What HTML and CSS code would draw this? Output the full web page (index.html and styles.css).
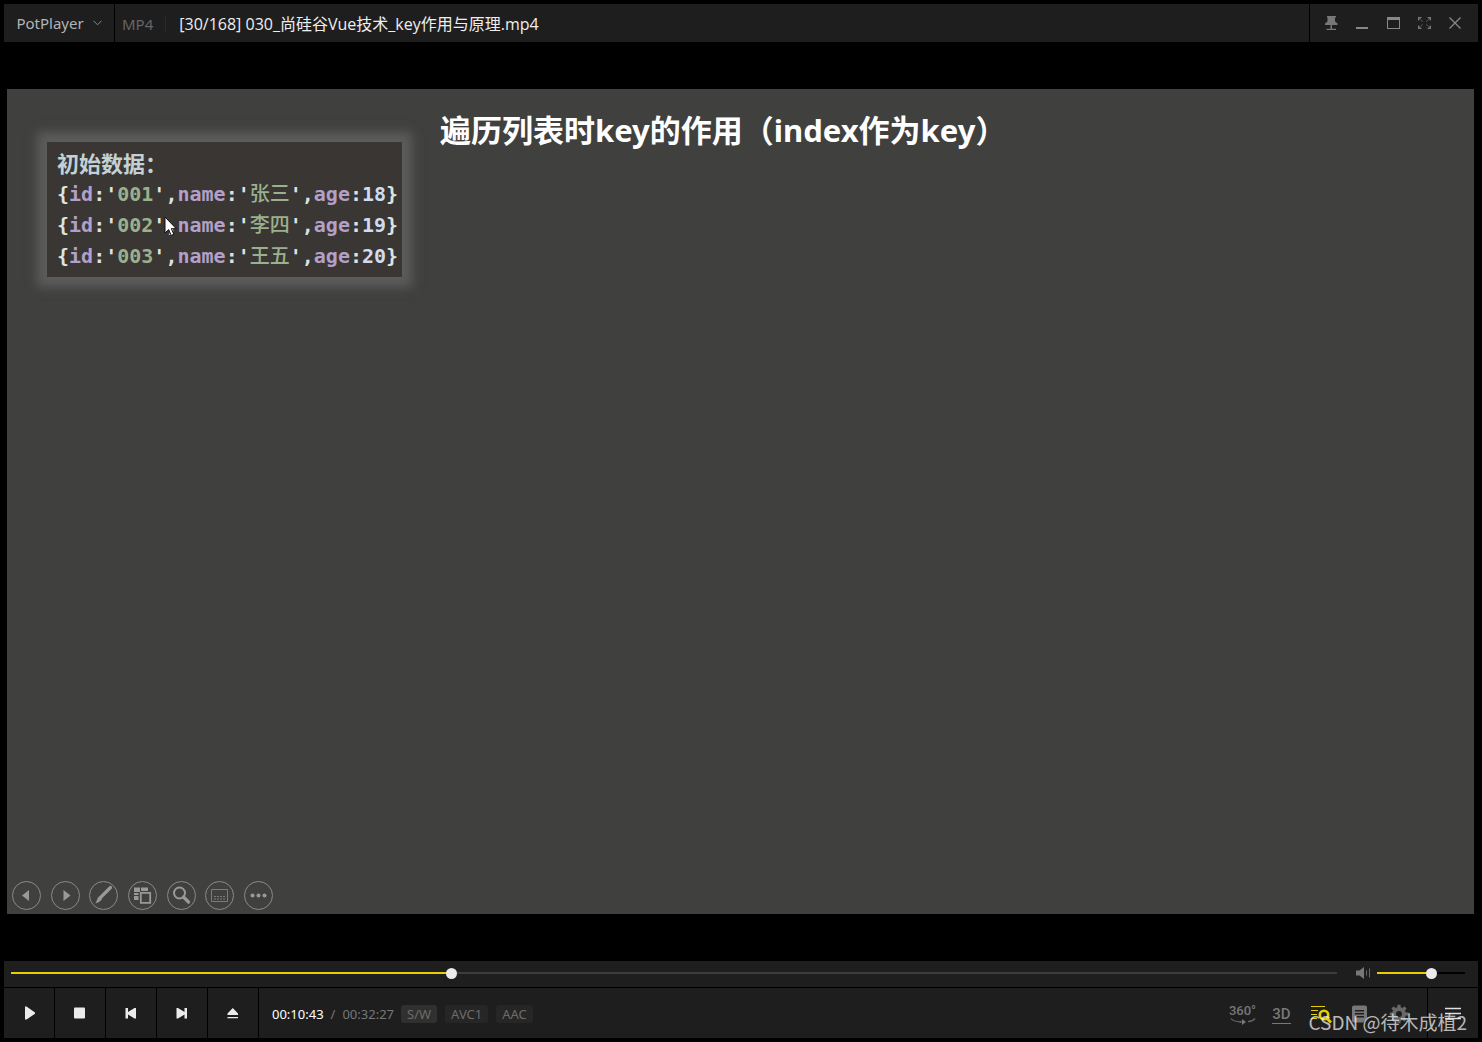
FILE: index.html
```html
<!DOCTYPE html>
<html lang="zh-CN">
<head>
<meta charset="utf-8">
<meta name="viewport" content="width=device-width, initial-scale=1">
<title>PotPlayer</title>
<link rel="stylesheet" href="styles.css">
</head>
<body>
<div class="player">
  <header class="titlebar">
    <button class="brand" type="button">PotPlayer
      <svg width="9" height="6" viewBox="0 0 9 6"><path d="M.5 .8 4.5 4.800 8.500 .8" fill="none" stroke="#8a8a8a"/></svg>
    </button>
    <div class="file">
      <span class="format">MP4</span>
      <span class="filename">[30/168] 030_尚硅谷Vue技术_key作用与原理.mp4</span>
    </div>
    <div class="window-buttons">
      <button type="button" aria-label="Pin"><svg width="14" height="16" viewBox="0 0 14 16" fill="#777"><path d="M3 1h9v1.500h-1v4l2.500 2V10H1V8.500l2.500-2v-4H3zM6.500 10h1.500v4h-1.500zM2.500 13.800h9.500V15H2.500z"/></svg></button>
      <button type="button" aria-label="Minimize"><svg width="14" height="16" viewBox="0 0 14 16"><path d="M1 12h12v2H1z" fill="#888"/></svg></button>
      <button type="button" aria-label="Maximize"><svg width="14" height="16" viewBox="0 0 14 16"><path d="M1 2h13v12H1zM2 5v8h11V5z" fill="#888" fill-rule="evenodd"/></svg></button>
      <button type="button" aria-label="Full screen"><svg width="14" height="16" viewBox="0 0 14 16" fill="#777"><path d="M1 2h4L1 6zM14 2v4l-4-4zM1 14v-4l4 4zM14 14h-4l4-4z"/><path d="m2 3 4 4M13 3 9 7M2 13l4-4M13 13 9 9" fill="none" stroke="#666" stroke-dasharray="2 1"/></svg></button>
      <button type="button" aria-label="Close"><svg width="14" height="16" viewBox="0 0 14 16"><path d="m1.500 2.500 11 11M12.500 2.500l-11 11" fill="none" stroke="#888" stroke-width="1.300"/></svg></button>
    </div>
  </header>

  <main class="stage">
    <section class="slide">
      <div class="slide-body">
        <div class="code">
          <h2 class="code-title">初始数据：</h2>
          <p>{<i>id</i>:'<b>001</b>',<i>name</i>:'<b class="han">张三</b>',<i>age</i>:<em>18</em>}</p>
          <p>{<i>id</i>:'<b>002</b>',<i>name</i>:'<b class="han">李四</b>',<i>age</i>:<em>19</em>}</p>
          <p>{<i>id</i>:'<b>003</b>',<i>name</i>:'<b class="han">王五</b>',<i>age</i>:<em>20</em>}</p>
          <svg class="cursor" width="14" height="21" viewBox="0 0 14 21"><path d="M1 1v16l3.700-3.400 2.500 5.800 2.600-1.100-2.500-5.600h5z" fill="#fff" stroke="#111"/></svg>
        </div>
        <h1 class="slide-title">遍历列表时key的作用（index作为key）</h1>
      </div>
      <nav class="slide-tools">
        <button type="button" aria-label="Previous slide"><svg width="27" height="27" viewBox="0 0 27 27"><path d="M16 8v11l-7-5.500z" fill="#999"/></svg></button>
        <button type="button" aria-label="Next slide"><svg width="27" height="27" viewBox="0 0 27 27"><path d="M11.500 8v11l7-5.500z" fill="#999"/></svg></button>
        <button type="button" aria-label="Pen"><svg width="27" height="27" viewBox="0 0 27 27"><path d="M20.500 5.500 13 13M12 14l-3 3" stroke="#999" stroke-width="3.200" stroke-linecap="round"/><path d="m9.500 15 2.500 2.500-3 2.500-3.500 1.500L7 18z" fill="#999"/></svg></button>
        <button type="button" aria-label="All slides"><svg width="27" height="27" viewBox="0 0 27 27"><path d="M5 5.500h6V10H5zM12 5.500h7V9h-7zM5 11h4.500v2H5zM5 14h4.500v4H5z" fill="#999"/><path d="M11.800 10.800h9.400v10h-9.400z" fill="#40403f" stroke="#999" stroke-width="1.800"/></svg></button>
        <button type="button" aria-label="Zoom"><svg width="27" height="27" viewBox="0 0 27 27" fill="none" stroke="#999"><circle cx="11.500" cy="11" r="5.500" stroke-width="2"/><path d="m15.500 15 5 5" stroke-width="3.200" stroke-linecap="round"/></svg></button>
        <button type="button" aria-label="Subtitles"><svg width="27" height="27" viewBox="0 0 27 27" fill="none" stroke="#7c7c7b"><path d="M5.500 7.500h16v12h-16z"/><path d="M8 14.500h11M8 17h11" stroke-dasharray="2 1"/></svg></button>
        <button type="button" aria-label="More"><svg width="27" height="27" viewBox="0 0 27 27" fill="#999"><circle cx="7.500" cy="13.500" r="2"/><circle cx="13.500" cy="13.500" r="2"/><circle cx="19.500" cy="13.500" r="2"/></svg></button>
      </nav>
    </section>
  </main>

  <div class="seekbar">
    <input class="seek" type="range" min="0" max="1947" value="644" aria-label="Position" style="--fill:33%">
    <button class="mute" type="button" aria-label="Mute"><svg width="16" height="14" viewBox="0 0 16 14"><path d="M1 4.500h3.500L9 1v12L4.500 9.500H1z" fill="#777"/><path d="M11.500 4.500v5M14.500 2.500v9" stroke="#666"/></svg></button>
    <input class="volume" type="range" min="0" max="100" value="63" aria-label="Volume" style="--fill:62%">
  </div>

  <footer class="controls">
    <button class="cell" type="button" aria-label="Play"><svg width="14" height="14" viewBox="0 0 14 14"><path d="M3 .5v13h1.500L13 7.800V6.500L4.500.5z" fill="#ebebeb"/></svg></button>
    <button class="cell" type="button" aria-label="Stop"><svg width="14" height="14" viewBox="0 0 14 14"><rect x="1" y="1.500" width="11" height="11" rx="1" fill="#ebebeb"/></svg></button>
    <button class="cell" type="button" aria-label="Previous"><svg width="14" height="14" viewBox="0 0 14 14"><path d="M1.500 2H4v4l6.500-4h1.500v10.500h-1.500L4 8.500v4H1.500z" fill="#ebebeb"/></svg></button>
    <button class="cell" type="button" aria-label="Next"><svg width="14" height="14" viewBox="0 0 14 14"><path d="M12 2H9.500v4L3 2H1.500v10.500H3l6.500-4v4H12z" fill="#ebebeb"/></svg></button>
    <button class="cell" type="button" aria-label="Open"><svg width="14" height="14" viewBox="0 0 14 14"><path d="M6.800 2 1.500 7.500V9h10.500V7.500zM1.500 11h10.500v1.200H1.500z" fill="#ebebeb"/></svg></button>
    <div class="info">
      <span class="time">00:10:43</span>
      <span class="slash">/</span>
      <span class="total">00:32:27</span>
      <div class="badges">
        <span class="badge badge-on">S/W</span>
        <span class="badge">AVC1</span>
        <span class="badge">AAC</span>
      </div>
      <div class="features">
        <button class="vr" type="button">360°<svg width="26" height="7" viewBox="0 0 26 7"><path d="M1 .5Q3 3.500 11 4M25 .5q-2 2.500-7 3.200" fill="none" stroke="#666" stroke-width="1.300"/><path d="M10 3.400h2V1l4 3-4 3V4.600h-2z" fill="#777"/></svg></button>
        <button class="three-d" type="button"><span>3D</span></button>
        <button type="button" aria-label="Browse"><svg width="22" height="20" viewBox="0 0 22 20" fill="none" stroke="#e6cf00"><path d="M1 2.500h14M1 6.500h7M1 10.500h6M1 14.500h6" stroke-width="1.200"/><circle cx="14" cy="11" r="4.200" stroke-width="2.600"/><path d="m17 14.500 4 4" stroke-width="3"/></svg></button>
        <button type="button" aria-label="Playlist"><svg width="18" height="20" viewBox="0 0 18 20"><path d="M3 1.500h11q2 0 2 2V14l-4 4.500H3q-2 0-2-2v-13q0-2 2-2zM4 6v1.500h9V6zM4 9v1.500h9V9zM4 12v1.500h9V12z" fill="#777" fill-rule="evenodd"/></svg></button>
        <button type="button" aria-label="Settings"><svg width="20" height="20" viewBox="0 0 20 20"><circle cx="10" cy="10" r="5" fill="none" stroke="#686868" stroke-width="4"/><path d="M10 .8v4M10 15.200v4M.8 10h4M15.200 10h4M3.500 3.500l3 3M13.500 13.500l3 3M16.500 3.500l-3 3M6.500 13.500l-3 3" stroke="#686868" stroke-width="3.200"/></svg></button>
      </div>
    </div>
    <button class="cell" type="button" aria-label="Menu"><svg width="16" height="14" viewBox="0 0 16 14"><path d="M0 2.500h16M0 7.500h16M0 12.500h16" stroke="#e0e0e0" stroke-width="1.400"/></svg></button>
  </footer>
  <div class="watermark">CSDN @待木成植2</div>
</div>
</body>
</html>
```
FILE: styles.css
```css
* {
  box-sizing: border-box;
}

body {
  margin: 0;
  background: #000;
  color: #777;
  font: 13px/18px "Noto Sans", "Noto Sans CJK SC", sans-serif;
}

button {
  display: flex;
  align-items: center;
  justify-content: center;
  margin: 0;
  padding: 0;
  border: 0;
  background: none;
  color: inherit;
  font: inherit;
}

svg {
  display: block;
  flex: none;
}

.player {
  position: relative;
  display: flex;
  flex-direction: column;
  min-height: 100vh;
  padding: 4px;
}

.titlebar {
  display: flex;
  gap: 1px;
  height: 38px;
}

.brand,
.file,
.window-buttons {
  background: #1e1e1e;
}

.brand {
  gap: 9px;
  width: 110px;
  color: #b4b4b4;
  font-size: 15px;
}

.file {
  display: flex;
  flex: 1;
  align-items: center;
  gap: 13px;
  padding: 2px 7px 0;
  font-size: 16px;
}

.format {
  padding-right: 12px;
  border-right: 1px solid #2a2a2a;
  color: #666;
  font-size: 15px;
}

.filename {
  color: #eee;
  font-family: "Open Sans", "Noto Sans CJK SC", sans-serif;
}

.window-buttons {
  display: flex;
  padding: 0 8px 0 5px;
}

.window-buttons button {
  width: 31px;
}

.stage {
  display: flex;
  flex: 1;
  padding: 47px 4px 47px 3px;
}

.slide {
  display: flex;
  flex: 1;
  flex-direction: column;
  justify-content: space-between;
  background: #40403f;
}

.slide-body {
  display: flex;
  align-items: flex-start;
  gap: 38px;
  padding-left: 40px;
}

.code {
  position: relative;
  width: 355px;
  margin-top: 53px;
  padding: 5px 0 5px 10px;
  background: #393634;
  box-shadow: 0 0 10px 10px #5c5c5b;
  color: #dde3e0;
  font: bold 20px/31px "DejaVu Sans Mono", "Noto Sans CJK SC", monospace;
  white-space: nowrap;
}

.code p {
  height: 31px;
  margin: 0;
}

.code i,
.code em {
  font-style: normal;
}

.code i {
  color: #b3a0c8;
}

.code b {
  color: #9bb08c;
}

.code .han {
  font-weight: 500;
}

.code em {
  color: #cfdcf0;
}

.code-title {
  margin: 0 0 1px;
  color: #c3d0d4;
  font: bold 22px/31px "Noto Sans CJK SC", sans-serif;
}

.cursor {
  position: absolute;
  top: 74px;
  left: 117px;
}

.slide-title {
  margin: 19px 0 0;
  color: #fff;
  font-size: 31px;
  font-weight: bold;
  line-height: 44px;
}

.slide-tools {
  display: flex;
  justify-content: space-between;
  width: 261px;
  margin: 0 0 4px 5px;
}

.slide-tools button {
  width: 29px;
  height: 29px;
  border: 1px solid #8a8a89;
  border-radius: 50%;
}

.seekbar {
  display: flex;
  align-items: center;
  height: 26px;
  margin-bottom: 1px;
  padding: 0 13px 2px 7px;
  background: #1e1e1e;
}

input[type="range"] {
  height: 11px;
  margin: 0;
  appearance: none;
  background: linear-gradient(#e6cf00, #e6cf00) left center / var(--fill) 2px no-repeat,
    linear-gradient(var(--rest), var(--rest)) center / 100% 2px no-repeat;
}

input[type="range"]::-webkit-slider-thumb {
  width: 11px;
  height: 11px;
  appearance: none;
  border-radius: 50%;
  background: #ebebeb;
}

.seek {
  --rest: #3c3c3c;
  flex: 1;
  min-width: 0;
}

.mute {
  margin: 0 6px 0 18px;
}

.volume {
  --rest: #000;
  width: 88px;
}

.controls {
  display: flex;
  gap: 1px;
  height: 50px;
}

.cell {
  width: 50px;
  background: #1e1e1e;
}

.info {
  display: flex;
  flex: 1;
  align-items: center;
  padding: 2px 9px 0 13px;
  background: #1e1e1e;
}

.time {
  color: #fff;
}

.slash {
  margin: 0 7px;
}

.badges {
  display: flex;
  gap: 8px;
  margin-left: 7px;
}

.badge {
  padding: 0 6px;
  border-radius: 3px;
  background: #262626;
  color: #6c6c6c;
}

.badge-on {
  background: #303030;
}

.features {
  display: flex;
  margin-left: auto;
}

.features button {
  width: 39px;
  height: 24px;
}

.features .vr {
  flex-direction: column;
  font: 500 13px/14px Roboto, sans-serif;
}

.three-d span {
  border-bottom: 1px solid #777;
  font: 500 15px/18px Roboto, sans-serif;
}

.watermark {
  position: absolute;
  right: 15px;
  bottom: 8px;
  color: rgba(255, 255, 255, 0.7);
  font: 19px/24px "Noto Sans CJK SC", sans-serif;
  pointer-events: none;
}
```
